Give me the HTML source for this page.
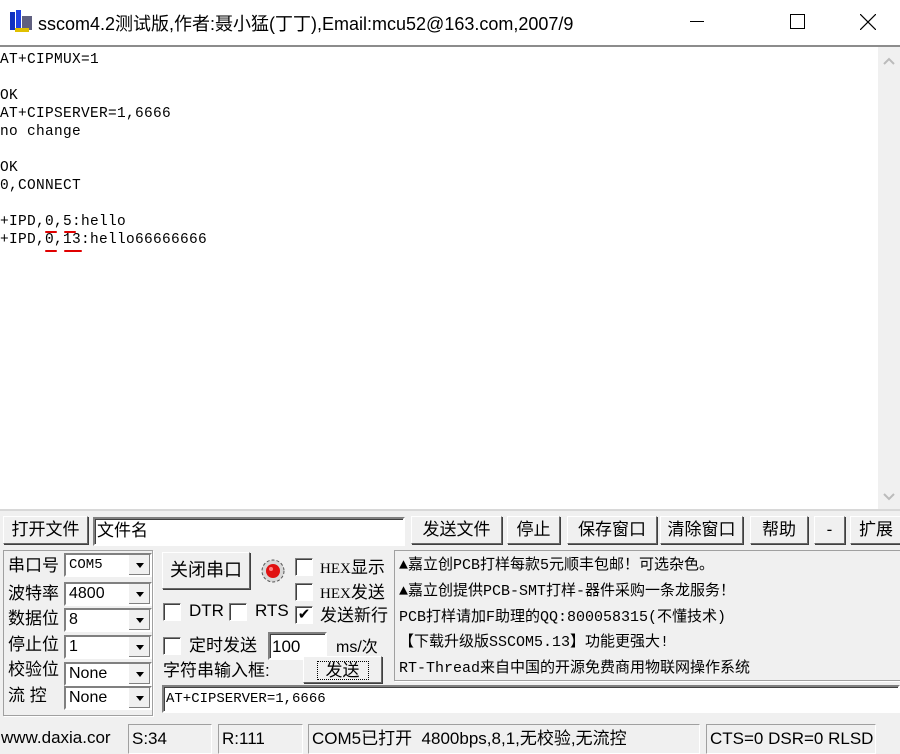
<!DOCTYPE html>
<html><head><meta charset="utf-8"><style>
*{box-sizing:border-box;margin:0;padding:0}
body{width:900px;height:754px;overflow:hidden;background:#f0f0f0;position:relative;font-family:"Liberation Sans","Noto Sans CJK SC",sans-serif;font-size:16px;color:#000}
.a{position:absolute}
.title{left:0;top:0;width:900px;height:45px;background:#fff}
.sep{left:0;top:45px;width:900px;height:2px;background:#8c8c8c}
.txt{left:0;top:47px;width:878px;height:462px;background:#fff;font-family:"Liberation Mono","Noto Sans CJK SC",monospace;font-size:14.5px;line-height:18px;padding-top:4px;white-space:pre;letter-spacing:0.3px}
.sb{left:878px;top:47px;width:22px;height:462px;background:#f0f0f0;color:#bbb;font-size:13px;text-align:center}
.btn{background:#f0f0f0;border:1px solid;border-color:#fff #696969 #696969 #fff;box-shadow:1px 1px 0 #404040;text-align:center;line-height:26px;font-size:17px}
.inp{background:#fff;border:2px solid;border-color:#808080 #fff #fff #808080;box-shadow:inset 1px 1px 0 #404040}
.grp{border:1px solid #a0a0a0;box-shadow:1px 1px 0 #fff}
.lbl{font-size:17px;line-height:20px}
.cb{width:18px;height:18px;background:#fff;border:1px solid;border-color:#808080 #fff #fff #808080;box-shadow:inset 1px 1px 0 #404040;font-size:15px;line-height:15px;text-align:center}
.combo{height:24px;width:88px;background:#fff;border:2px solid;border-color:#808080 #fff #fff #808080;font-size:16px;line-height:20px;padding-left:3px}
.combo i{position:absolute;right:0;top:0;width:22px;height:20px;background:#f0f0f0;border-left:1px solid #fff;box-shadow:inset -1px -1px 0 #808080}
.combo i:after{content:"";position:absolute;left:7px;top:8px;border:4px solid transparent;border-top:5px solid #000}
.msg{font-family:"Liberation Mono","Noto Sans CJK SC",monospace;font-size:15px;line-height:25px;white-space:nowrap}
.st{top:724px;height:30px;border:1px solid;border-color:#a0a0a0 #fff #fff #a0a0a0;font-size:17px;line-height:28px;padding-left:3px;white-space:nowrap;overflow:hidden}
</style></head><body>
<div class="a title">
 <svg class="a" style="left:10px;top:10px" width="24" height="22"><rect x="0" y="2" width="5" height="18" fill="#1030c0"/><rect x="6" y="0" width="5" height="20" fill="#2040e0"/><rect x="12" y="6" width="10" height="14" fill="#606080"/><rect x="5" y="18" width="14" height="4" fill="#e0c000"/></svg>
 <div class="a" style="left:38px;top:10px;font-size:18px">sscom4.2测试版,作者:聂小猛(丁丁),Email:mcu52@163.com,2007/9</div>
 <div class="a" style="left:690px;top:21px;width:14px;height:1px;background:#000"></div>
 <div class="a" style="left:790px;top:14px;width:15px;height:15px;border:1px solid #000"></div>
 <svg class="a" style="left:860px;top:14px" width="16" height="16"><path d="M0 0L16 16M16 0L0 16" stroke="#000" stroke-width="1.2"/></svg>
</div>
<div class="a sep"></div>
<div class="a txt">AT+CIPMUX=1

OK
AT+CIPSERVER=1,6666
no change

OK
0,CONNECT

+IPD,0,5:hello
+IPD,0,13:hello66666666</div>
<div class="a" style="left:45px;top:231px;width:12px;height:2px;background:#e00000;border-radius:1px"></div>
<div class="a" style="left:64px;top:231px;width:12px;height:2px;background:#e00000;border-radius:1px"></div>
<div class="a" style="left:45px;top:250px;width:12px;height:2px;background:#e00000;border-radius:1px"></div>
<div class="a" style="left:64px;top:250px;width:18px;height:2px;background:#e00000;border-radius:1px"></div>
<div class="a sb">
 <svg class="a" style="left:5px;top:10px" width="12" height="8"><path d="M1 7L6 2L11 7" stroke="#bbb" stroke-width="2" fill="none"/></svg>
 <svg class="a" style="left:5px;top:446px" width="12" height="8"><path d="M1 1L6 6L11 1" stroke="#bbb" stroke-width="2" fill="none"/></svg>
</div>
<div class="a" style="left:0;top:509px;width:900px;height:2px;background:#d8d8d8"></div>

<div class="a btn" style="left:3px;top:516px;width:85px;height:28px">打开文件</div>
<div class="a inp" style="left:93px;top:517px;width:312px;height:29px;font-size:17px;line-height:24px;padding-left:2px">文件名</div>
<div class="a btn" style="left:411px;top:516px;width:91px;height:28px">发送文件</div>
<div class="a btn" style="left:507px;top:516px;width:53px;height:28px">停止</div>
<div class="a btn" style="left:567px;top:516px;width:90px;height:28px">保存窗口</div>
<div class="a btn" style="left:660px;top:516px;width:83px;height:28px">清除窗口</div>
<div class="a btn" style="left:750px;top:516px;width:58px;height:28px">帮助</div>
<div class="a btn" style="left:814px;top:516px;width:31px;height:28px">-</div>
<div class="a btn" style="left:850px;top:516px;width:52px;height:28px">扩展</div>

<div class="a grp" style="left:3px;top:550px;width:150px;height:166px"></div>
<div class="a lbl" style="left:8px;top:556px">串口号</div>
<div class="a lbl" style="left:8px;top:584px">波特率</div>
<div class="a lbl" style="left:8px;top:609px">数据位</div>
<div class="a lbl" style="left:8px;top:635px">停止位</div>
<div class="a lbl" style="left:8px;top:660px">校验位</div>
<div class="a lbl" style="left:8px;top:686px">流 控</div>
<div class="a combo" style="left:64px;top:553px;font-family:'Liberation Mono',monospace;font-size:14px">COM5<i></i></div>
<div class="a combo" style="left:64px;top:582px">4800<i></i></div>
<div class="a combo" style="left:64px;top:608px">8<i></i></div>
<div class="a combo" style="left:64px;top:635px">1<i></i></div>
<div class="a combo" style="left:64px;top:662px">None<i></i></div>
<div class="a combo" style="left:64px;top:686px">None<i></i></div>

<div class="a btn" style="left:162px;top:552px;width:88px;height:37px;line-height:35px;font-size:18px">关闭串口</div>
<svg class="a" style="left:261px;top:559px" width="24" height="24"><circle cx="12" cy="12" r="11" fill="#d8d8d8" stroke="#555" stroke-dasharray="3 2"/><circle cx="12" cy="12" r="7" fill="#e01010"/><circle cx="10" cy="10" r="2" fill="#ff8080"/></svg>
<div class="a cb" style="left:295px;top:558px"></div><div class="a lbl" style="left:320px;top:558px"><span style="font-family:'Liberation Serif',serif;font-size:15px">HEX</span>显示</div>
<div class="a cb" style="left:295px;top:583px"></div><div class="a lbl" style="left:320px;top:583px"><span style="font-family:'Liberation Serif',serif;font-size:15px">HEX</span>发送</div>
<div class="a cb" style="left:295px;top:606px">✔</div><div class="a lbl" style="left:320px;top:606px">发送新行</div>
<div class="a cb" style="left:163px;top:603px"></div><div class="a lbl" style="left:189px;top:601px">DTR</div>
<div class="a cb" style="left:229px;top:603px"></div><div class="a lbl" style="left:255px;top:601px">RTS</div>
<div class="a cb" style="left:163px;top:637px"></div><div class="a lbl" style="left:189px;top:636px">定时发送</div>
<div class="a inp" style="left:268px;top:632px;width:59px;height:28px;font-size:17px;line-height:26px;padding-left:2px">100</div>
<div class="a" style="left:336px;top:633px;font-size:16px">ms/次</div>
<div class="a lbl" style="left:163px;top:661px">字符串输入框:</div>
<div class="a btn" style="left:303px;top:656px;width:79px;height:27px;line-height:17px;padding-top:4px"><span style="display:inline-block;border:1px dotted #000;padding:0 8px;font-size:17px">发送</span></div>
<div class="a inp" style="left:162px;top:685px;width:738px;height:28px;font-family:'Liberation Mono',monospace;font-size:14px;line-height:24px;padding-left:2px">AT+CIPSERVER=1,6666</div>

<div class="a grp" style="left:394px;top:550px;width:510px;height:131px"></div>
<div class="a msg" style="left:399px;top:553px">▲嘉立创PCB打样每款5元顺丰包邮！可选杂色。</div>
<div class="a msg" style="left:399px;top:579px">▲嘉立创提供PCB-SMT打样-器件采购一条龙服务！</div>
<div class="a msg" style="left:399px;top:605px">PCB打样请加F助理的QQ:800058315(不懂技术)</div>
<div class="a msg" style="left:399px;top:630px">【下载升级版SSCOM5.13】功能更强大!</div>
<div class="a msg" style="left:399px;top:656px">RT-Thread来自中国的开源免费商用物联网操作系统</div>

<div class="a st" style="left:0;width:124px;border:none;padding-left:1px">www.daxia.cor</div>
<div class="a st" style="left:128px;width:84px">S:34</div>
<div class="a st" style="left:218px;width:85px">R:111</div>
<div class="a st" style="left:308px;width:392px">COM5已打开&nbsp; 4800bps,8,1,无校验,无流控</div>
<div class="a st" style="left:706px;width:170px">CTS=0 DSR=0 RLSD</div>
</body></html>
